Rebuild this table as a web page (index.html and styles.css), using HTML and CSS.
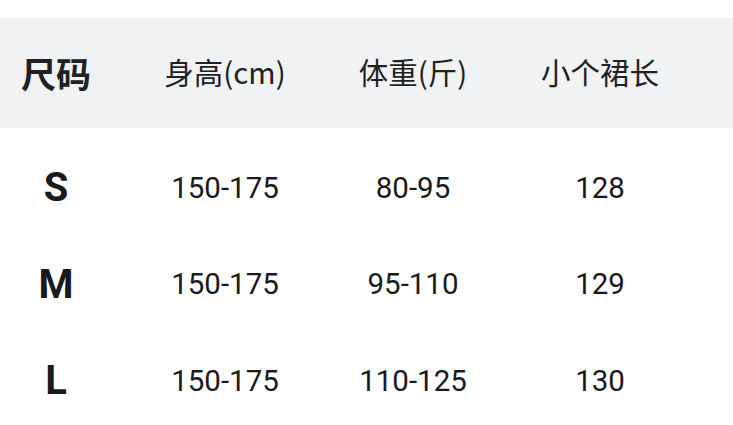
FILE: index.html
```html
<!DOCTYPE html>
<html lang="zh-CN">
<head>
<meta charset="utf-8">
<link rel="stylesheet" href="styles.css">
</head>
<body>
<div class="chart">
  <div class="row head">
    <div class="cell size">尺码</div>
    <div class="cell">身高(cm)</div>
    <div class="cell">体重(斤)</div>
    <div class="cell">小个裙长</div>
  </div>
  <div class="body">
    <div class="row">
      <div class="cell size">S</div>
      <div class="cell">150-175</div>
      <div class="cell">80-95</div>
      <div class="cell">128</div>
    </div>
    <div class="row">
      <div class="cell size">M</div>
      <div class="cell">150-175</div>
      <div class="cell">95-110</div>
      <div class="cell">129</div>
    </div>
    <div class="row">
      <div class="cell size">L</div>
      <div class="cell">150-175</div>
      <div class="cell">110-125</div>
      <div class="cell">130</div>
    </div>
  </div>
</div>
</body>
</html>
```

FILE: styles.css
```css
html, body {
  margin: 0;
  padding: 0;
  background: #ffffff;
  width: 733px;
  height: 425px;
  overflow: hidden;
}

.chart {
  padding-top: 18px;
  font-family: Roboto, "Noto Sans CJK SC", sans-serif;
  color: #1a1a1c;
}

.row {
  display: grid;
  grid-template-columns: 112px 226px 150px 224px 1fr;
  align-items: center;
  height: 96.5px;
}

.cell {
  text-align: center;
  font-size: 29.5px;
  line-height: 1;
}

.size {
  font-weight: 700;
  font-size: 40px;
}

.head {
  height: 110px;
  background: #f1f2f3;
}

.head .cell {
  font-family: "Noto Sans CJK SC", sans-serif;
  font-size: 29.5px;
  color: #202124;
  padding-bottom: 2px;
}

.head .size {
  font-size: 35px;
  font-weight: 700;
}

.body {
  padding-top: 12px;
}
```
